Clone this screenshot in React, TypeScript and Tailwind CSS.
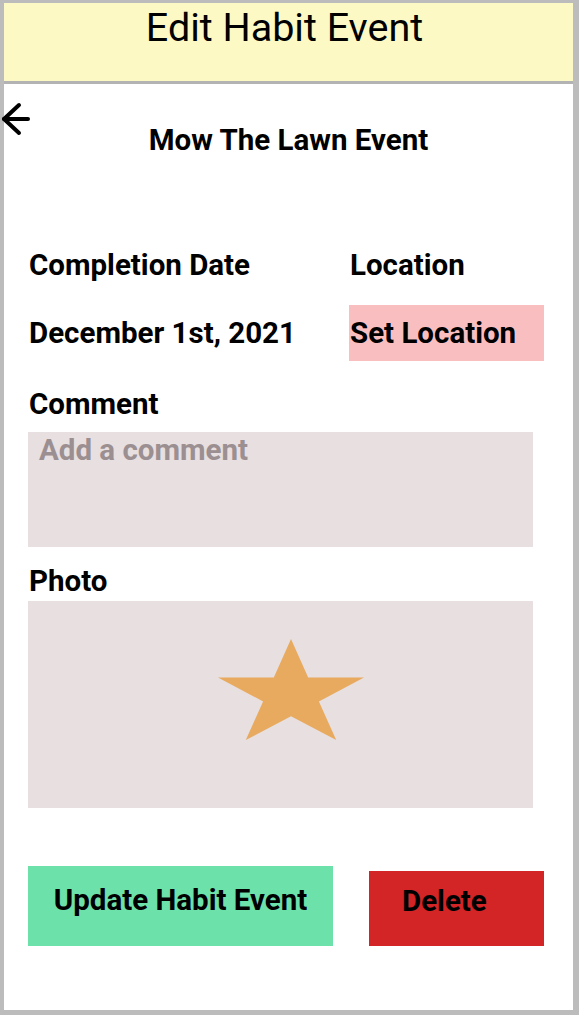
const font = { fontFamily: "Roboto, 'Noto Sans', sans-serif" };

function BackArrow() {
  return (
    <svg
      className="absolute left-0 top-[102px]"
      width="32"
      height="36"
      viewBox="0 0 32 36"
      fill="none"
      stroke="#000"
      strokeWidth="4"
      strokeLinecap="round"
      strokeLinejoin="round"
    >
      <path d="M4 17H28" />
      <path d="M19 3L4 17L19 31" />
    </svg>
  );
}

function Star() {
  return (
    <svg width="146" height="101" viewBox="0 0 146 101">
      <polygon
        fill="#e8aa5e"
        points="73,0 90.2,38.6 146,38.6 100.9,62.4 118.2,101 73,77.2 27.8,101 45.1,62.4 0,38.6 55.8,38.6"
      />
    </svg>
  );
}

export default function App() {
  return (
    <div
      className="relative flex h-[1015px] w-[579px] flex-col bg-[#bcbcbc] pb-[5px] pl-[4px] pr-[6px] pt-[3px]"
      style={font}
    >
      <header className="h-[78px] bg-[#fcf9c5] pr-[8px] pt-[2px] text-center text-[39.5px] leading-[46px] text-black">
        Edit Habit Event
      </header>
      <div className="h-[3px] bg-[#b3b3b3]" />
      <main className="flex grow flex-col bg-white pl-[24px] font-bold text-black">
        <h1 className="mt-[40px] pr-[24px] text-center text-[29.5px] leading-[32px]">
          Mow The Lawn Event
        </h1>

        <div className="mt-[93px] flex text-[29.5px] leading-[32px]">
          <div className="w-[321px] pl-[1px]">Completion Date</div>
          <div className="pl-[1px]">Location</div>
        </div>

        <div className="mt-[24px] flex items-center text-[29.5px] leading-[32px]">
          <div className="w-[321px] pl-[1px]">December 1st, 2021</div>
          <button className="flex h-[56px] w-[195px] items-center bg-[#f9bfc0] pl-[1px] text-left font-bold">
            Set Location
          </button>
        </div>

        <div className="mt-[27px] pl-[1px] text-[29.5px] leading-[32px]">
          Comment
        </div>
        <div className="mt-[12px] h-[115px] w-[505px] bg-[#e7dfe0] pl-[11px] pt-[2px] text-[29.5px] leading-[32px] text-[#9b8f91]">
          Add a comment
        </div>

        <div className="mt-[18px] pl-[1px] text-[29.5px] leading-[32px]">
          Photo
        </div>
        <div className="mt-[4px] h-[207px] w-[505px] bg-[#e7dfe0] pl-[190px] pt-[38px]">
          <Star />
        </div>

        <div className="mt-[58px] flex items-end text-[29.5px] leading-[32px]">
          <button className="h-[80px] w-[305px] bg-[#6de1aa] font-bold">
            <span className="block -translate-y-[6px]">Update Habit Event</span>
          </button>
          <button className="ml-[36px] h-[75px] w-[175px] bg-[#d32426] pl-[33px] text-left font-bold">
            <span className="block -translate-y-[8px]">Delete</span>
          </button>
        </div>
      </main>
      <BackArrow />
    </div>
  );
}
